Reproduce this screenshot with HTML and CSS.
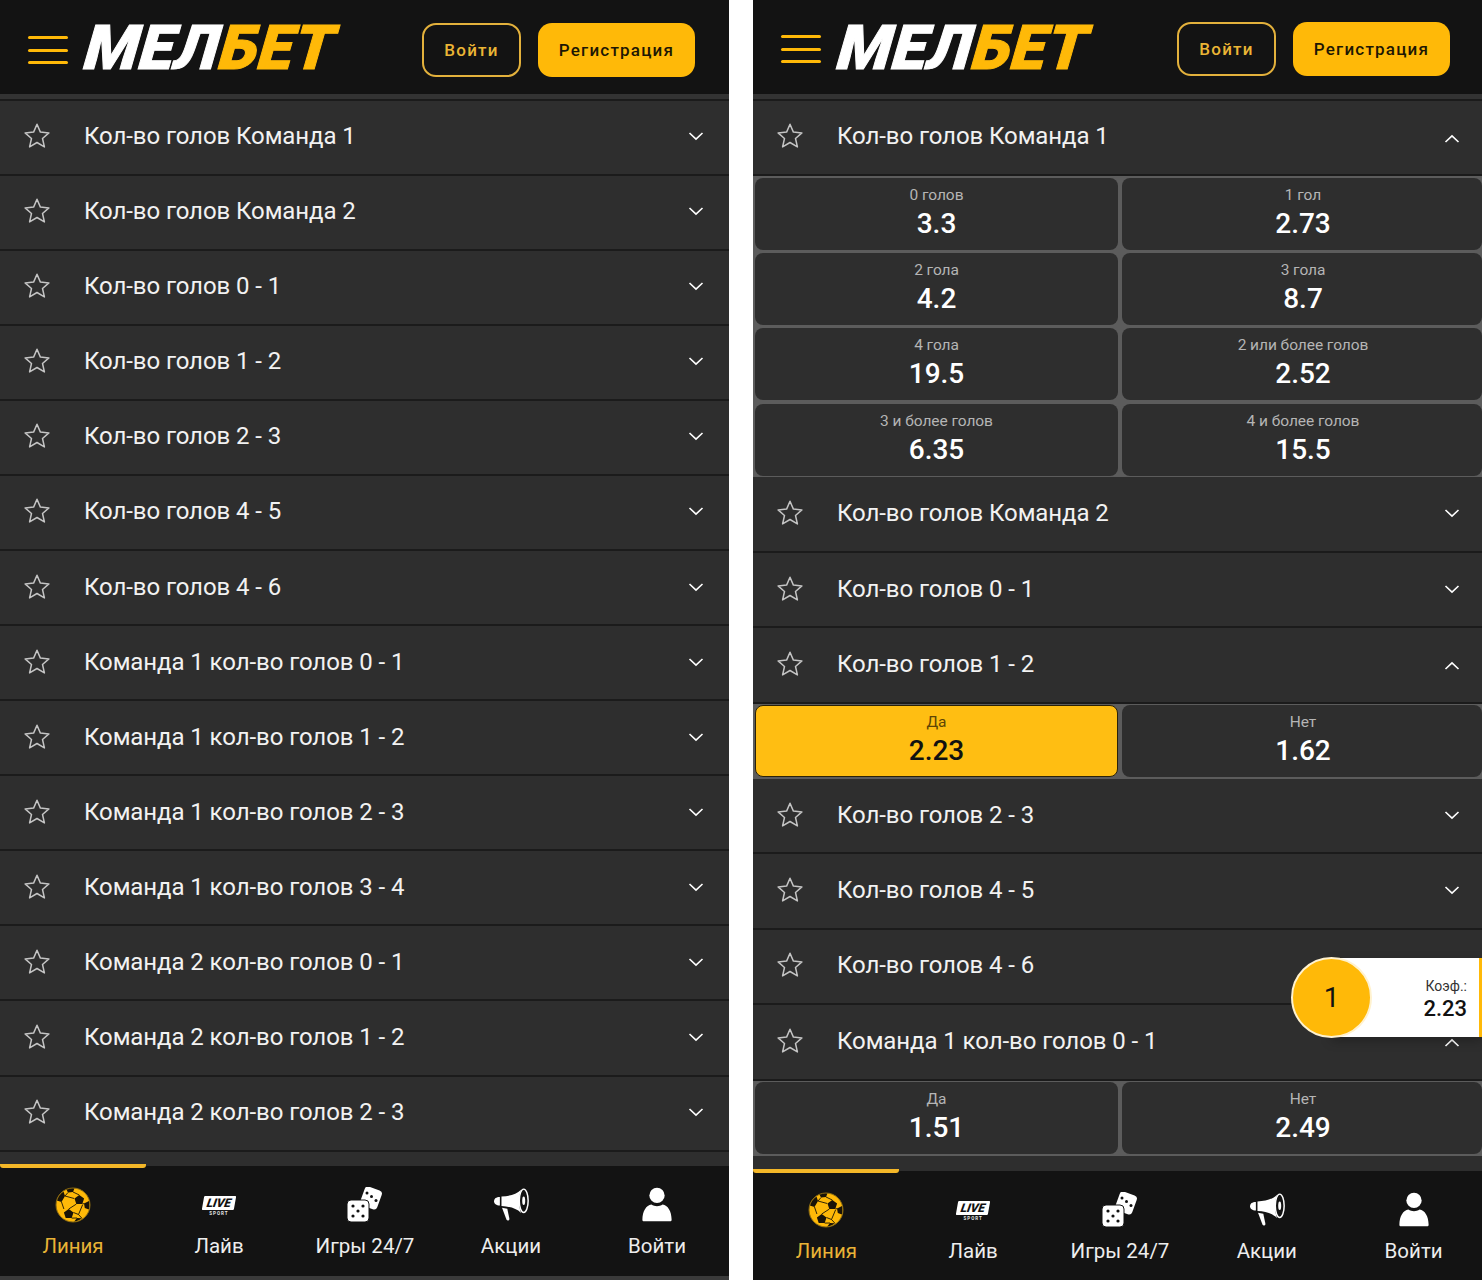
FILE: index.html
```html
<!DOCTYPE html>
<html lang="ru">
<head>
  <meta charset="UTF-8">
  <title>Мелбет</title>
  <meta name="viewport" content="width=device-width, initial-scale=1.0">
  <link rel="stylesheet" href="styles.css">
</head>
<body>

  <svg class="sprites" width="0" height="0">
    <symbol id="star" viewBox="0 0 28 28">
      <path d="M14 2.2l3.4 7.9 8.5.8-6.4 5.6 1.9 8.4L14 20.5l-7.4 4.4 1.9-8.4-6.4-5.6 8.5-.8z" fill="none" stroke="#c4c4c4" stroke-width="1.5" stroke-linejoin="round"/>
    </symbol>
    <symbol id="chev-down" viewBox="0 0 16 10">
      <path d="M1.5 2l6.5 6.2L14.5 2" fill="none" stroke="#fff" stroke-width="1.6"/>
    </symbol>
    <symbol id="chev-up" viewBox="0 0 16 10">
      <path d="M1.5 8L8 1.800 14.5 8" fill="none" stroke="#fff" stroke-width="1.6"/>
    </symbol>
    <symbol id="ball" viewBox="0 0 36 36">
      <circle cx="18" cy="18" r="17" fill="#ffb908"/>
      <path d="M24.3 8l4.800 3.500-1.800 5.600h-6l-1.800-5.600zM13.700 22l4.800 3.500-1.800 5.600h-6l-1.800-5.600z" fill="#1a1408"/>
      <path d="M8.500 4.500L10 9l-3.500 6L1.800 13.500C3 9.500 5.500 6.500 8.500 4.500zM11 1.800C14 .8 17 .8 19.500 1.200L18 5l-5 .5zM34 14c.8 3 .7 6-.2 8.500l-4-1.500-.8-4.500zM19 34.800l3-3.800 5 .3c-2.500 2-5 3-8 3.500z" fill="#1a1408"/>
      <path d="M18 5l6.300 3M10 9l3-3.500M19.200 11.500L10 9M6.500 15l2.400 7M13.700 22l7.600-4.900M27.300 17.100l2 -.6M18.500 25.500l5 2 3.500 3.800M16.700 31.100l5.300 -.1M23.500 27.500l4-9.500" stroke="#1a1408" stroke-width=".9" fill="none"/>
      <circle cx="18" cy="18" r="17" fill="none" stroke="#8a6a12" stroke-width="1"/>
    </symbol>
    <symbol id="dice" viewBox="0 0 36 36">
      <rect x="15" y="1" width="18" height="20" rx="3.500" fill="#fff" transform="rotate(20 24 11)"/>
      <circle cx="20" cy="6" r="1.500" fill="#111"/>
      <circle cx="24.500" cy="9.500" r="1.500" fill="#111"/>
      <circle cx="29" cy="13.500" r="1.500" fill="#111"/>
      <rect x="0" y="13" width="22" height="22" rx="4" fill="#fff" stroke="#131313" stroke-width="1"/>
      <circle cx="6" cy="19" r="1.600" fill="#111"/>
      <circle cx="16" cy="19" r="1.600" fill="#111"/>
      <circle cx="11" cy="24" r="1.600" fill="#111"/>
      <circle cx="6" cy="29" r="1.600" fill="#111"/>
      <circle cx="16" cy="29" r="1.600" fill="#111"/>
    </symbol>
    <symbol id="horn" viewBox="0 0 34 32">
      <ellipse cx="29" cy="12" rx="4.200" ry="11" fill="none" stroke="#fff" stroke-width="1.400"/>
      <ellipse cx="29" cy="12" rx="1.400" ry="4" fill="#fff"/>
      <path d="M26.500 1.500C22 6 16 7.500 8 8v9c8 .5 14 2 18.500 6.500C24 17 24 8 26.500 1.500z" fill="#fff"/>
      <path d="M6.500 8.500v8C3 16.500 1 15 1 12.500s2-4 5.500-4z" fill="#fff"/>
      <path d="M8.500 18.500l5 1 2 9.500c.3 1.500-1.800 2.500-2.700 1z" fill="#fff"/>
    </symbol>
    <symbol id="user" viewBox="0 0 28 32">
      <circle cx="14" cy="7.500" r="6.800" fill="#fff"/>
      <path d="M1 29c0-7.500 3.500-13 8-13.500 3 2 7 2 10 0 4.500.5 8 6 8 13.500 0 1-.6 1.500-1.500 1.500h-23C1.600 30.500 1 30 1 29z" fill="#fff"/>
    </symbol>
  </svg>

  <div class="phones">

    <div class="phone phone-left">
      <header class="topbar">
        <div class="burger"><span></span><span></span><span></span></div>
        <div class="logo"><span class="logo-white">МЕЛ</span><span class="logo-yellow">БЕТ</span></div>
        <div class="top-buttons">
          <button class="btn-login">Войти</button>
          <button class="btn-register">Регистрация</button>
        </div>
      </header>

      <main class="markets">
        <div class="row"><svg class="star"><use href="#star"/></svg><span class="title">Кол-во голов Команда 1</span><svg class="chev"><use href="#chev-down"/></svg></div>
        <div class="row"><svg class="star"><use href="#star"/></svg><span class="title">Кол-во голов Команда 2</span><svg class="chev"><use href="#chev-down"/></svg></div>
        <div class="row"><svg class="star"><use href="#star"/></svg><span class="title">Кол-во голов 0 - 1</span><svg class="chev"><use href="#chev-down"/></svg></div>
        <div class="row"><svg class="star"><use href="#star"/></svg><span class="title">Кол-во голов 1 - 2</span><svg class="chev"><use href="#chev-down"/></svg></div>
        <div class="row"><svg class="star"><use href="#star"/></svg><span class="title">Кол-во голов 2 - 3</span><svg class="chev"><use href="#chev-down"/></svg></div>
        <div class="row"><svg class="star"><use href="#star"/></svg><span class="title">Кол-во голов 4 - 5</span><svg class="chev"><use href="#chev-down"/></svg></div>
        <div class="row"><svg class="star"><use href="#star"/></svg><span class="title">Кол-во голов 4 - 6</span><svg class="chev"><use href="#chev-down"/></svg></div>
        <div class="row"><svg class="star"><use href="#star"/></svg><span class="title">Команда 1 кол-во голов 0 - 1</span><svg class="chev"><use href="#chev-down"/></svg></div>
        <div class="row"><svg class="star"><use href="#star"/></svg><span class="title">Команда 1 кол-во голов 1 - 2</span><svg class="chev"><use href="#chev-down"/></svg></div>
        <div class="row"><svg class="star"><use href="#star"/></svg><span class="title">Команда 1 кол-во голов 2 - 3</span><svg class="chev"><use href="#chev-down"/></svg></div>
        <div class="row"><svg class="star"><use href="#star"/></svg><span class="title">Команда 1 кол-во голов 3 - 4</span><svg class="chev"><use href="#chev-down"/></svg></div>
        <div class="row"><svg class="star"><use href="#star"/></svg><span class="title">Команда 2 кол-во голов 0 - 1</span><svg class="chev"><use href="#chev-down"/></svg></div>
        <div class="row"><svg class="star"><use href="#star"/></svg><span class="title">Команда 2 кол-во голов 1 - 2</span><svg class="chev"><use href="#chev-down"/></svg></div>
        <div class="row"><svg class="star"><use href="#star"/></svg><span class="title">Команда 2 кол-во голов 2 - 3</span><svg class="chev"><use href="#chev-down"/></svg></div>
      </main>

      <nav class="tabbar">
        <div class="tab tab-active"><svg class="tab-icon"><use href="#ball"/></svg><span>Линия</span></div>
        <div class="tab">
          <div class="tab-live"><span class="live-badge"><b>LIVE</b></span><span class="live-sport">SPORT</span></div>
          <span>Лайв</span>
        </div>
        <div class="tab"><svg class="tab-icon"><use href="#dice"/></svg><span>Игры 24/7</span></div>
        <div class="tab"><svg class="tab-icon"><use href="#horn"/></svg><span>Акции</span></div>
        <div class="tab"><svg class="tab-icon"><use href="#user"/></svg><span>Войти</span></div>
      </nav>
    </div>

    <div class="phone phone-right">
      <header class="topbar">
        <div class="burger"><span></span><span></span><span></span></div>
        <div class="logo"><span class="logo-white">МЕЛ</span><span class="logo-yellow">БЕТ</span></div>
        <div class="top-buttons">
          <button class="btn-login">Войти</button>
          <button class="btn-register">Регистрация</button>
        </div>
      </header>

      <main class="markets">
        <div class="row"><svg class="star"><use href="#star"/></svg><span class="title">Кол-во голов Команда 1</span><svg class="chev chev-open"><use href="#chev-up"/></svg></div>
        <div class="odds">
          <div class="odd"><span class="odd-label">0 голов</span><span class="odd-value">3.3</span></div>
          <div class="odd"><span class="odd-label">1 гол</span><span class="odd-value">2.73</span></div>
          <div class="odd"><span class="odd-label">2 гола</span><span class="odd-value">4.2</span></div>
          <div class="odd"><span class="odd-label">3 гола</span><span class="odd-value">8.7</span></div>
          <div class="odd"><span class="odd-label">4 гола</span><span class="odd-value">19.5</span></div>
          <div class="odd"><span class="odd-label">2 или более голов</span><span class="odd-value">2.52</span></div>
          <div class="odd"><span class="odd-label">3 и более голов</span><span class="odd-value">6.35</span></div>
          <div class="odd"><span class="odd-label">4 и более голов</span><span class="odd-value">15.5</span></div>
        </div>
        <div class="row"><svg class="star"><use href="#star"/></svg><span class="title">Кол-во голов Команда 2</span><svg class="chev"><use href="#chev-down"/></svg></div>
        <div class="row"><svg class="star"><use href="#star"/></svg><span class="title">Кол-во голов 0 - 1</span><svg class="chev"><use href="#chev-down"/></svg></div>
        <div class="row"><svg class="star"><use href="#star"/></svg><span class="title">Кол-во голов 1 - 2</span><svg class="chev chev-open"><use href="#chev-up"/></svg></div>
        <div class="odds">
          <div class="odd odd-selected"><span class="odd-label">Да</span><span class="odd-value">2.23</span></div>
          <div class="odd"><span class="odd-label">Нет</span><span class="odd-value">1.62</span></div>
        </div>
        <div class="row"><svg class="star"><use href="#star"/></svg><span class="title">Кол-во голов 2 - 3</span><svg class="chev"><use href="#chev-down"/></svg></div>
        <div class="row"><svg class="star"><use href="#star"/></svg><span class="title">Кол-во голов 4 - 5</span><svg class="chev"><use href="#chev-down"/></svg></div>
        <div class="row"><svg class="star"><use href="#star"/></svg><span class="title">Кол-во голов 4 - 6</span><svg class="chev"><use href="#chev-down"/></svg></div>
        <div class="row"><svg class="star"><use href="#star"/></svg><span class="title">Команда 1 кол-во голов 0 - 1</span><svg class="chev chev-open"><use href="#chev-up"/></svg></div>
        <div class="odds">
          <div class="odd"><span class="odd-label">Да</span><span class="odd-value">1.51</span></div>
          <div class="odd"><span class="odd-label">Нет</span><span class="odd-value">2.49</span></div>
        </div>
      </main>

      <div class="coupon">
        <div class="coupon-odds"><span class="coupon-label">Коэф.:</span><span class="coupon-value">2.23</span></div>
        <div class="coupon-count">1</div>
      </div>

      <nav class="tabbar">
        <div class="tab tab-active"><svg class="tab-icon"><use href="#ball"/></svg><span>Линия</span></div>
        <div class="tab">
          <div class="tab-live"><span class="live-badge"><b>LIVE</b></span><span class="live-sport">SPORT</span></div>
          <span>Лайв</span>
        </div>
        <div class="tab"><svg class="tab-icon"><use href="#dice"/></svg><span>Игры 24/7</span></div>
        <div class="tab"><svg class="tab-icon"><use href="#horn"/></svg><span>Акции</span></div>
        <div class="tab"><svg class="tab-icon"><use href="#user"/></svg><span>Войти</span></div>
      </nav>
    </div>

  </div>

</body>
</html>
```

FILE: styles.css
```css
* {
  margin: 0;
  padding: 0;
  box-sizing: border-box;
  font-family: Roboto, 'Liberation Sans', sans-serif;
}

body {
  background: #fff;
  color: #f2f2f2;
  width: 1482px;
  height: 1280px;
  overflow: hidden;
}

.sprites {
  position: absolute;
}

.phones {
  display: flex;
  gap: 24px;
  height: 1280px;
}

.phone {
  position: relative;
  width: 729px;
  height: 1280px;
  display: flex;
  flex-direction: column;
  background: #2e2e2e;
  overflow: hidden;
}

.phone-left {
  padding-bottom: 4px;
  background: #3a3a3a;
}

/* header */

.topbar {
  flex: none;
  height: 94px;
  display: flex;
  align-items: center;
  padding: 6px 34px 0 28px;
  background: #131313;
}

.phone-right .topbar {
  padding: 4px 32px 0 28px;
}

.burger {
  width: 40px;
  display: flex;
  flex-direction: column;
  gap: 9.5px;
}

.burger span {
  height: 3px;
  border-radius: 2px;
  background: #ffb908;
}

.logo {
  margin: -6px 0 0 18px;
  width: 256px;
  font-size: 62px;
  line-height: 62px;
  font-family: Inter, sans-serif;
  font-weight: 900;
  letter-spacing: 0.6px;
  white-space: nowrap;
  -webkit-text-stroke: 1px currentColor;
  transform: skewX(-16deg);
}

.phone-right .logo {
  margin-top: -4px;
}

.logo-white {
  color: #fff;
}

.logo-yellow {
  color: #ffb908;
}

.top-buttons {
  margin-left: auto;
  display: flex;
  gap: 17px;
}

.top-buttons button {
  height: 54px;
  border-radius: 14px;
  font-size: 17px;
  font-weight: 500;
  letter-spacing: 1.2px;
}

.btn-login {
  width: 99px;
  background: transparent;
  border: 2px solid #e3b13c;
  color: #ebb535;
}

.btn-register {
  width: 157px;
  background: #ffb908;
  border: none;
  color: #1d1704;
}

/* market list */

.markets {
  flex: 1;
  min-height: 0;
  padding-top: 6.5px;
  overflow: hidden;
  background: #2e2e2e;
  box-shadow: inset 0 5px 0 #333;
}

.row {
  height: 75.08px;
  display: flex;
  align-items: center;
  background: #2e2e2e;
  border-bottom: 2px solid #1b1b1b;
  padding: 0 25px 2px 23px;
}

.markets .row:first-child {
  border-top: 2px solid #1b1b1b;
  margin-top: -2px;
  height: 77.08px;
}

.star {
  width: 28px;
  height: 28px;
  flex: none;
}

.title {
  margin-left: 33px;
  font-size: 24px;
  letter-spacing: -0.08px;
  white-space: nowrap;
}

.chev {
  margin-left: auto;
  width: 16px;
  height: 10px;
  flex: none;
}

.chev-open {
  margin-top: 5px;
}

.phone-right .row {
  height: 75.4px;
  padding-right: 22px;
}

.phone-right .markets .row:first-child {
  height: 77.4px;
}

/* odds tiles */

.odds {
  display: grid;
  grid-template-columns: 363px 360px;
  gap: 3.4px 4px;
  padding: 1.7px 0 1.7px 2px;
  background: #5c5c5c;
}

.odd {
  height: 72px;
  display: flex;
  flex-direction: column;
  align-items: center;
  padding-top: 8px;
  border-radius: 8px;
  background: #2e2e2e;
}

.odd:nth-child(even) {
  padding-left: 2px;
}

.odd-label {
  font-size: 15.5px;
  line-height: 18px;
  letter-spacing: -0.05px;
  color: #b5b5b5;
}

.odd-value {
  margin-top: 4px;
  font-size: 28px;
  line-height: 32px;
  font-weight: 500;
  color: #fff;
}

.odd-selected {
  background: #ffbe12;
  border: 1px solid #2b2208;
  padding-top: 7px;
}

.odd-selected .odd-label {
  color: #5d4505;
}

.odd-selected .odd-value {
  color: #111;
}

/* floating coupon */

.coupon {
  position: absolute;
  top: 958px;
  right: 0;
  width: 191px;
  height: 79px;
  color: #111;
}

.coupon-count {
  position: absolute;
  left: 0;
  top: -1px;
  width: 81px;
  height: 81px;
  display: flex;
  align-items: center;
  justify-content: center;
  border-radius: 50%;
  border: 2px solid #fff2cf;
  background: #ffb908;
  font-size: 28px;
}

.coupon-odds {
  position: absolute;
  left: 40px;
  right: 0;
  top: 0;
  bottom: 0;
  padding: 19px 12px 0 0;
  display: flex;
  flex-direction: column;
  align-items: flex-end;
  background: #fff;
  border-right: 3px solid #ffb908;
  box-shadow: 0 4px 10px rgba(0, 0, 0, 0.25);
}

.coupon-label {
  font-size: 14px;
  line-height: 18px;
  color: #333;
}

.coupon-value {
  font-size: 22px;
  line-height: 28px;
  font-weight: 500;
}

/* bottom bar */

.tabbar {
  position: relative;
  flex: none;
  width: 730px;
  height: 110px;
  display: grid;
  grid-template-columns: repeat(5, 1fr);
  background: #131313;
}

.phone-right .tabbar {
  width: 734px;
  height: 109px;
}

.tabbar::before {
  content: "";
  position: absolute;
  left: 0;
  top: -2px;
  width: 146px;
  height: 4px;
  border-radius: 0 0 3px 3px;
  background: #f4b728;
}

.tab {
  position: relative;
  display: flex;
  flex-direction: column;
  align-items: center;
  padding-top: 21px;
  font-size: 20.5px;
  color: #ededed;
}

.tab > span {
  position: absolute;
  top: 68px;
  white-space: nowrap;
}

.tab-active {
  color: #e9b336;
}

.tab-icon {
  width: 36px;
  height: 36px;
}

.tab-live {
  width: 36px;
  height: 36px;
  padding-top: 9px;
  display: flex;
  flex-direction: column;
  align-items: center;
}

.live-badge {
  width: 32px;
  height: 14px;
  display: flex;
  align-items: center;
  justify-content: center;
  background: #fff;
  border-radius: 1px;
  transform: skewX(-10deg);
}

.live-badge b {
  font-size: 12px;
  line-height: 14px;
  font-weight: 900;
  font-style: italic;
  color: #111;
}

.live-sport {
  font-size: 4.5px;
  line-height: 7px;
  font-weight: 700;
  letter-spacing: 1px;
  color: #e8e8e8;
}
```
